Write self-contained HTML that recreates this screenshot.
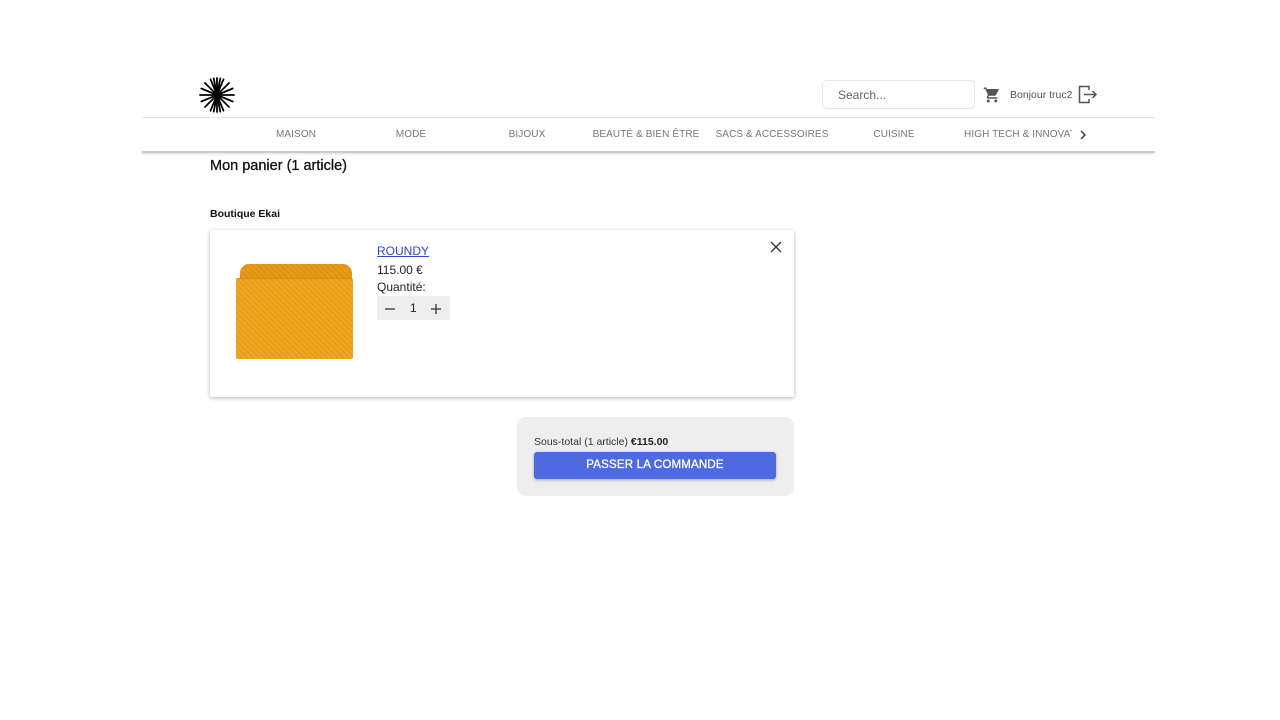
<!DOCTYPE html>
<html><head><meta charset="utf-8"><style>
*{box-sizing:border-box;margin:0;padding:0}
body{width:1280px;height:720px;background:#fff;font-family:"Liberation Sans",sans-serif;position:relative;overflow:hidden;color:#111}
.abs{position:absolute}
.nav span{position:absolute;top:129px;font-size:10px;color:#777;transform:translateX(-50%);white-space:nowrap;letter-spacing:.1px}
</style></head><body>
<svg class="abs" style="left:199px;top:77px" width="36" height="36" viewBox="-18 -18 36 36">
<g stroke="#000" stroke-width="1.8" stroke-linecap="round">
<line x1="0" y1="-17" x2="0" y2="17"/><line x1="-17" y1="0" x2="17" y2="0"/>
<line x1="-12" y1="-12" x2="12" y2="12"/><line x1="-12" y1="12" x2="12" y2="-12"/>
<line x1="-6.5" y1="-15.7" x2="6.5" y2="15.7"/><line x1="6.5" y1="-15.7" x2="-6.5" y2="15.7"/>
<line x1="-15.7" y1="-6.5" x2="15.7" y2="6.5"/><line x1="-15.7" y1="6.5" x2="15.7" y2="-6.5"/>
<line x1="-3.3" y1="-16.6" x2="3.3" y2="16.6"/><line x1="3.3" y1="-16.6" x2="-3.3" y2="16.6"/>
</g><circle r="4" fill="#000"/></svg>
<div class="abs" style="left:822px;top:80px;width:153px;height:29px;border:1px solid #e6e6e6;border-radius:5px;font-size:12px;color:#666;padding:7px 0 0 15px">Search...</div>
<svg class="abs" style="left:983px;top:86px" width="18" height="18" viewBox="0 0 24 24"><path fill="#555" d="M7 18c-1.1 0-2 .9-2 2s.9 2 2 2 2-.9 2-2-.9-2-2-2zM1 2v2h2l3.6 7.6-1.4 2.4c-.1.3-.2.6-.2 1 0 1.1.9 2 2 2h12v-2H7.4c-.1 0-.2-.1-.2-.2v-.1l.9-1.7h7.4c.8 0 1.4-.4 1.7-1l3.6-6.5c.1-.2.2-.3.2-.5 0-.6-.4-1-1-1H5.2l-.9-2H1zm16 16c-1.1 0-2 .9-2 2s.9 2 2 2 2-.9 2-2-.9-2-2-2z"/></svg>
<div class="abs" style="left:1010px;top:89px;font-size:10.5px;color:#555">Bonjour truc2</div>
<svg class="abs" style="left:1078px;top:85px" width="20" height="19" viewBox="0 0 20 19" fill="none" stroke="#555" stroke-width="1.5"><path d="M11 5V1.5H1.5v16H11V14"/><path d="M6 9.5h12M14.5 6l3.5 3.5-3.5 3.5"/></svg>
<div class="abs" style="left:142px;top:117px;width:1013px;height:1px;background:#e4e4e4"></div>
<div class="abs" style="left:142px;top:151px;width:1013px;height:2px;background:#ccc;box-shadow:0 1px 2px rgba(0,0,0,.15)"></div>
<div class="nav"><span style="left:296px">MAISON</span><span style="left:411px">MODE</span><span style="left:527px">BIJOUX</span><span style="left:646px">BEAUTÉ &amp; BIEN ÊTRE</span><span style="left:772px">SACS &amp; ACCESSOIRES</span><span style="left:894px">CUISINE</span><span style="left:964px;transform:none;width:108px;overflow:hidden">HIGH TECH &amp; INNOVATION</span></div>
<svg class="abs" style="left:1079px;top:130px" width="8" height="10" viewBox="0 0 8 10"><path d="M2 1l4 4-4 4" stroke="#333" stroke-width="1.4" fill="none"/></svg>
<div class="abs" style="left:210px;top:158px;font-size:14.5px;color:#111;-webkit-text-stroke:.3px #111">Mon panier (1 article)</div>
<div class="abs" style="left:210px;top:208px;font-size:10.5px;font-weight:bold">Boutique Ekai</div>
<div class="abs" style="left:210px;top:230px;width:584px;height:167px;background:#fff;box-shadow:0 1px 4px rgba(0,0,0,.3);border-radius:2px"></div>
<div class="abs" style="left:240px;top:264px;width:112px;height:30px;background:repeating-linear-gradient(45deg,rgba(180,100,0,.15) 0 2px,transparent 2px 4px),#e89a18;border-radius:9px 9px 0 0"></div>
<div class="abs" style="left:236px;top:278px;width:117px;height:81px;background:repeating-linear-gradient(45deg,rgba(180,100,0,.15) 0 2px,transparent 2px 4px),#f0a621;border-radius:2px;border-top:1px solid #d88e10"></div>
<a class="abs" style="left:377px;top:244px;font-size:12px;color:#3344cc;text-decoration:underline">ROUNDY</a>
<div class="abs" style="left:377px;top:263px;font-size:12px;color:#222">115.00 €</div>
<div class="abs" style="left:377px;top:280px;font-size:12px;color:#222">Quantité:</div>
<div class="abs" style="left:377px;top:296px;width:73px;height:24px;background:#eee"></div>
<svg class="abs" style="left:384px;top:303px" width="60" height="12" viewBox="0 0 60 12" stroke="#333" stroke-width="1.3"><path d="M1 6h10M47 6h10M52 1v10"/></svg>
<div class="abs" style="left:410px;top:301px;font-size:12px;color:#222">1</div>
<svg class="abs" style="left:770px;top:241px" width="12" height="12" viewBox="0 0 12 12" stroke="#333" stroke-width="1.3"><path d="M1 1l10 10M11 1L1 11"/></svg>
<div class="abs" style="left:517px;top:417px;width:277px;height:79px;background:#eee;border-radius:9px"></div>
<div class="abs" style="left:534px;top:436px;font-size:10.5px;color:#333">Sous-total (1 article) <b style="color:#222">€115.00</b></div>
<div class="abs" style="left:534px;top:452px;width:242px;height:27px;background:#4f6ae0;border-radius:3px;box-shadow:0 1px 3px rgba(0,0,0,.3);color:#fff;font-size:11.5px;text-align:center;line-height:27px;letter-spacing:.2px;-webkit-text-stroke:.3px #fff">PASSER LA COMMANDE</div>
</body></html>
